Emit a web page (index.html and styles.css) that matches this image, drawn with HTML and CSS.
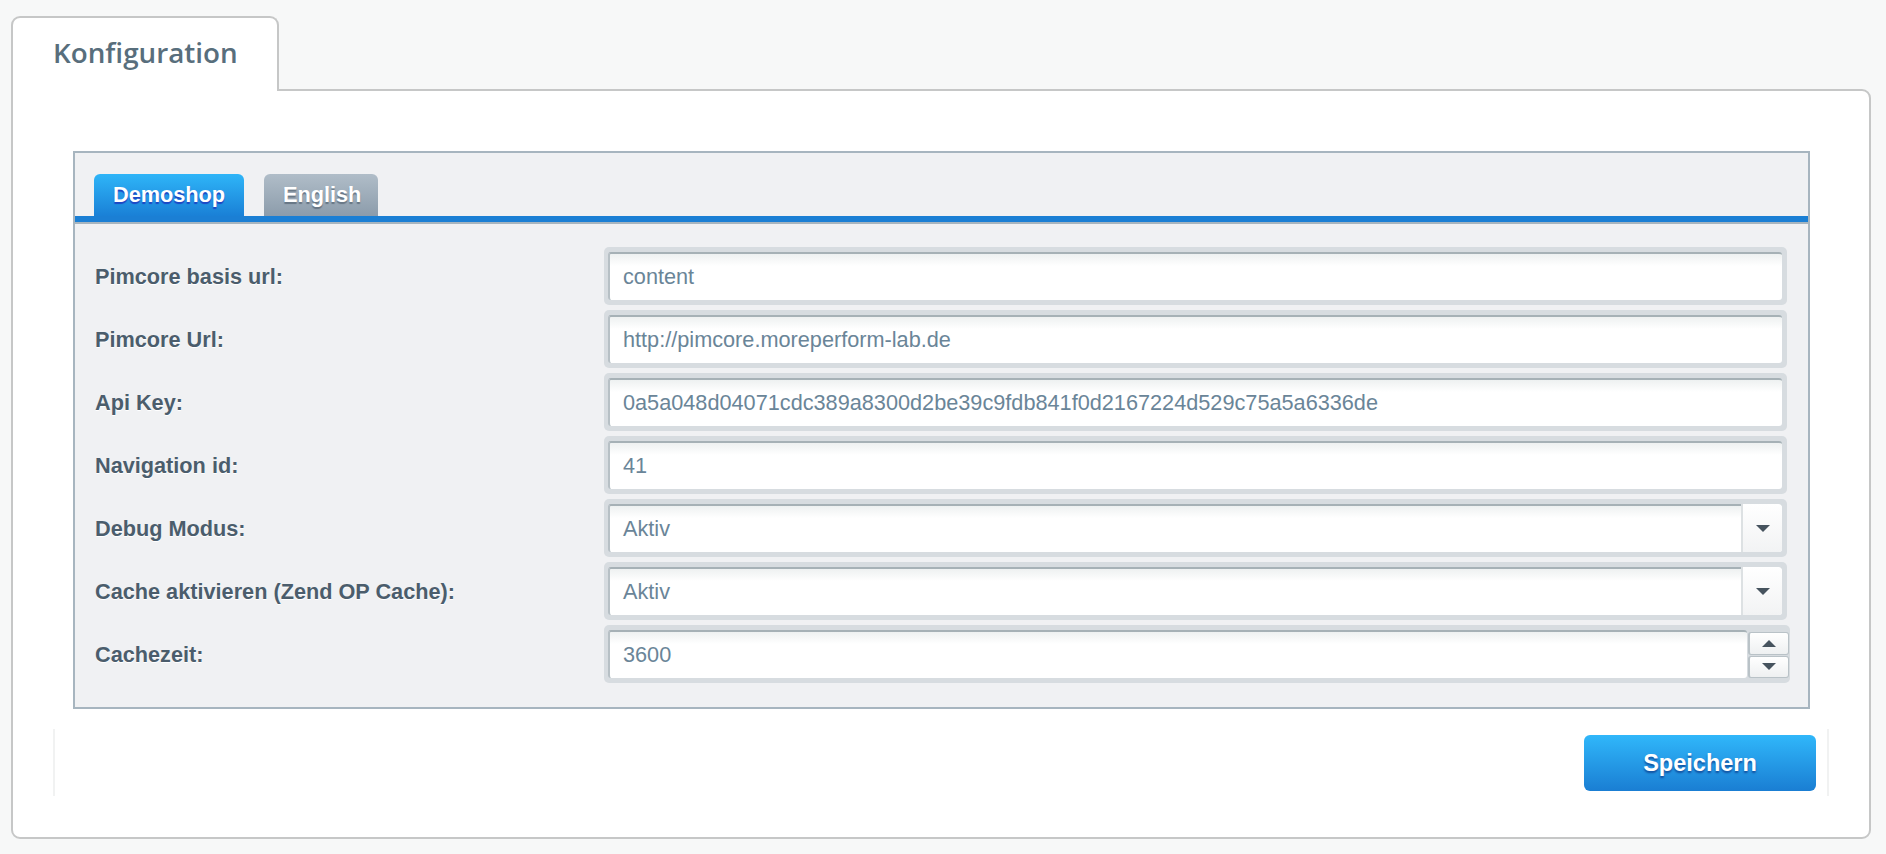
FILE: index.html
```html
<!DOCTYPE html>
<html lang="de">
<head>
<meta charset="utf-8">
<title>Konfiguration</title>
<link rel="stylesheet" href="styles.css">
</head>
<body>
<div class="page">
  <div class="page-tabs">
    <div class="page-tab">Konfiguration</div>
  </div>
  <div class="main-panel">
    <div class="form-panel">
      <div class="shop-tabs">
        <div class="shop-tab active">Demoshop</div>
        <div class="shop-tab">English</div>
      </div>
      <div class="tab-bar"></div>
      <div class="form-body">
        <div class="row">
          <div class="label">Pimcore basis url:</div>
          <div class="frame"><div class="field"><span class="value">content</span></div></div>
        </div>
        <div class="row">
          <div class="label">Pimcore Url:</div>
          <div class="frame"><div class="field"><span class="value">http://pimcore.moreperform-lab.de</span></div></div>
        </div>
        <div class="row">
          <div class="label">Api Key:</div>
          <div class="frame"><div class="field"><span class="value">0a5a048d04071cdc389a8300d2be39c9fdb841f0d2167224d529c75a5a6336de</span></div></div>
        </div>
        <div class="row">
          <div class="label">Navigation id:</div>
          <div class="frame"><div class="field"><span class="value">41</span></div></div>
        </div>
        <div class="row">
          <div class="label">Debug Modus:</div>
          <div class="frame"><div class="field"><span class="value">Aktiv</span><div class="trigger"><span class="tri-down"></span></div></div></div>
        </div>
        <div class="row">
          <div class="label">Cache aktivieren (Zend OP Cache):</div>
          <div class="frame"><div class="field"><span class="value">Aktiv</span><div class="trigger"><span class="tri-down"></span></div></div></div>
        </div>
        <div class="row">
          <div class="label">Cachezeit:</div>
          <div class="frame spin-frame">
            <div class="field spin-field"><span class="value">3600</span></div>
            <div class="spinner">
              <div class="spin-btn"><span class="tri-up"></span></div>
              <div class="spin-btn"><span class="tri-down"></span></div>
            </div>
          </div>
        </div>
      </div>
    </div>
    <div class="toolbar">
      <div class="save-btn">Speichern</div>
    </div>
  </div>
</div>
</body>
</html>
```
FILE: styles.css
```css
html, body {
  margin: 0;
  padding: 0;
  background: #f7f8f8;
}

.page {
  padding: 16px 15px 14px 11px;
  font-family: "Liberation Sans", Arial, sans-serif;
}

.page-tabs {
  display: flex;
  position: relative;
  z-index: 2;
  margin-bottom: -2px;
}

.page-tab {
  width: 268px;
  height: 75px;
  box-sizing: border-box;
  border: 2px solid #c6c7c7;
  border-bottom: none;
  border-radius: 9px 9px 0 0;
  background: #ffffff;
  padding: 15px 0 0 40px;
  font-family: "Open Sans", "Noto Sans", sans-serif;
  font-weight: 600;
  font-size: 27.8px;
  color: #586e7c;
}

.main-panel {
  border: 2px solid #c6c7c7;
  border-radius: 0 9px 9px 9px;
  background: #ffffff;
  padding: 60px 59px 41px 60px;
}

.form-panel {
  border: 2px solid #a7b5bf;
  background: #f0f1f3;
}

.shop-tabs {
  display: flex;
  gap: 20px;
  padding: 21px 0 0 19px;
}

.shop-tab {
  height: 42px;
  box-sizing: border-box;
  padding: 0 19px;
  display: flex;
  align-items: center;
  border-radius: 6px 6px 0 0;
  font-weight: bold;
  font-size: 21.7px;
  color: #ffffff;
  background: linear-gradient(#b0bdc8, #8c9cab);
  text-shadow: 0 2px 1px rgba(90, 105, 120, 0.8);
  width: 114px;
}

.shop-tab.active {
  background: linear-gradient(#2fb5f8, #1a80d6);
  text-shadow: 0 2px 1px #1c45c4;
  width: 150px;
}

.tab-bar {
  height: 6px;
  background: #1b7fd4;
  border-bottom: 2px solid #a7b5bf;
}

.form-body {
  padding: 23px 21px 24px 20px;
  display: flex;
  flex-direction: column;
  gap: 5px;
}

.row {
  display: grid;
  grid-template-columns: 509px 1fr;
  align-items: center;
  height: 58px;
}

.label {
  font-weight: bold;
  font-size: 21.7px;
  color: #4b5d6c;
  text-shadow: 0 1px 0 #ffffff;
  padding-top: 2px;
}

.frame {
  height: 58px;
  box-sizing: border-box;
  padding: 5px 5px 5px 4px;
  background: #d7dce0;
  border-radius: 5px;
  display: flex;
  gap: 1px;
}

.field {
  flex: 1;
  display: flex;
  align-items: center;
  box-sizing: border-box;
  height: 48px;
  background: linear-gradient(#eef1f1, #ffffff 12px);
  border-top: 2px solid #a6b1b6;
  border-left: 2px solid #b7c0c5;
  border-radius: 3px;
  padding-left: 13px;
  position: relative;
}

.value {
  font-size: 21.7px;
  color: #6a8598;
  flex: 1;
}

.trigger {
  width: 39px;
  align-self: stretch;
  margin-top: -2px;
  border-left: 2px solid #dde1e3;
  border-radius: 0 3px 3px 0;
  background: linear-gradient(#ffffff, #f2f3f4);
  display: flex;
  align-items: center;
  justify-content: center;
}

.tri-down {
  width: 0;
  height: 0;
  border-left: 7px solid transparent;
  border-right: 7px solid transparent;
  border-top: 7px solid #46535e;
}

.tri-up {
  width: 0;
  height: 0;
  border-left: 7px solid transparent;
  border-right: 7px solid transparent;
  border-bottom: 7px solid #46535e;
}

.spin-frame {
  margin-right: -3px;
  padding-right: 1px;
}

.spinner {
  width: 41px;
  display: flex;
  flex-direction: column;
  gap: 1px;
  padding-top: 2px;
}

.spin-btn {
  flex: 1;
  box-sizing: border-box;
  border: 1px solid #b9c2c7;
  border-left-width: 2px;
  border-radius: 3px;
  background: linear-gradient(#ffffff, #eef0f1);
  display: flex;
  align-items: center;
  justify-content: center;
}

.toolbar {
  margin: 20px -19px 0 -20px;
  height: 67px;
  box-sizing: border-box;
  border-left: 2px solid #f1f2f2;
  border-right: 2px solid #f1f2f2;
  display: flex;
  justify-content: flex-end;
  align-items: flex-start;
  padding: 6px 11px 0 0;
}

.save-btn {
  width: 232px;
  height: 56px;
  border-radius: 6px;
  background: linear-gradient(#30b7fa, #1a7ed3);
  color: #ffffff;
  font-weight: bold;
  font-size: 23.5px;
  display: flex;
  align-items: center;
  justify-content: center;
  text-shadow: 0 2px 2px rgba(10, 50, 130, 0.7);
}
```
